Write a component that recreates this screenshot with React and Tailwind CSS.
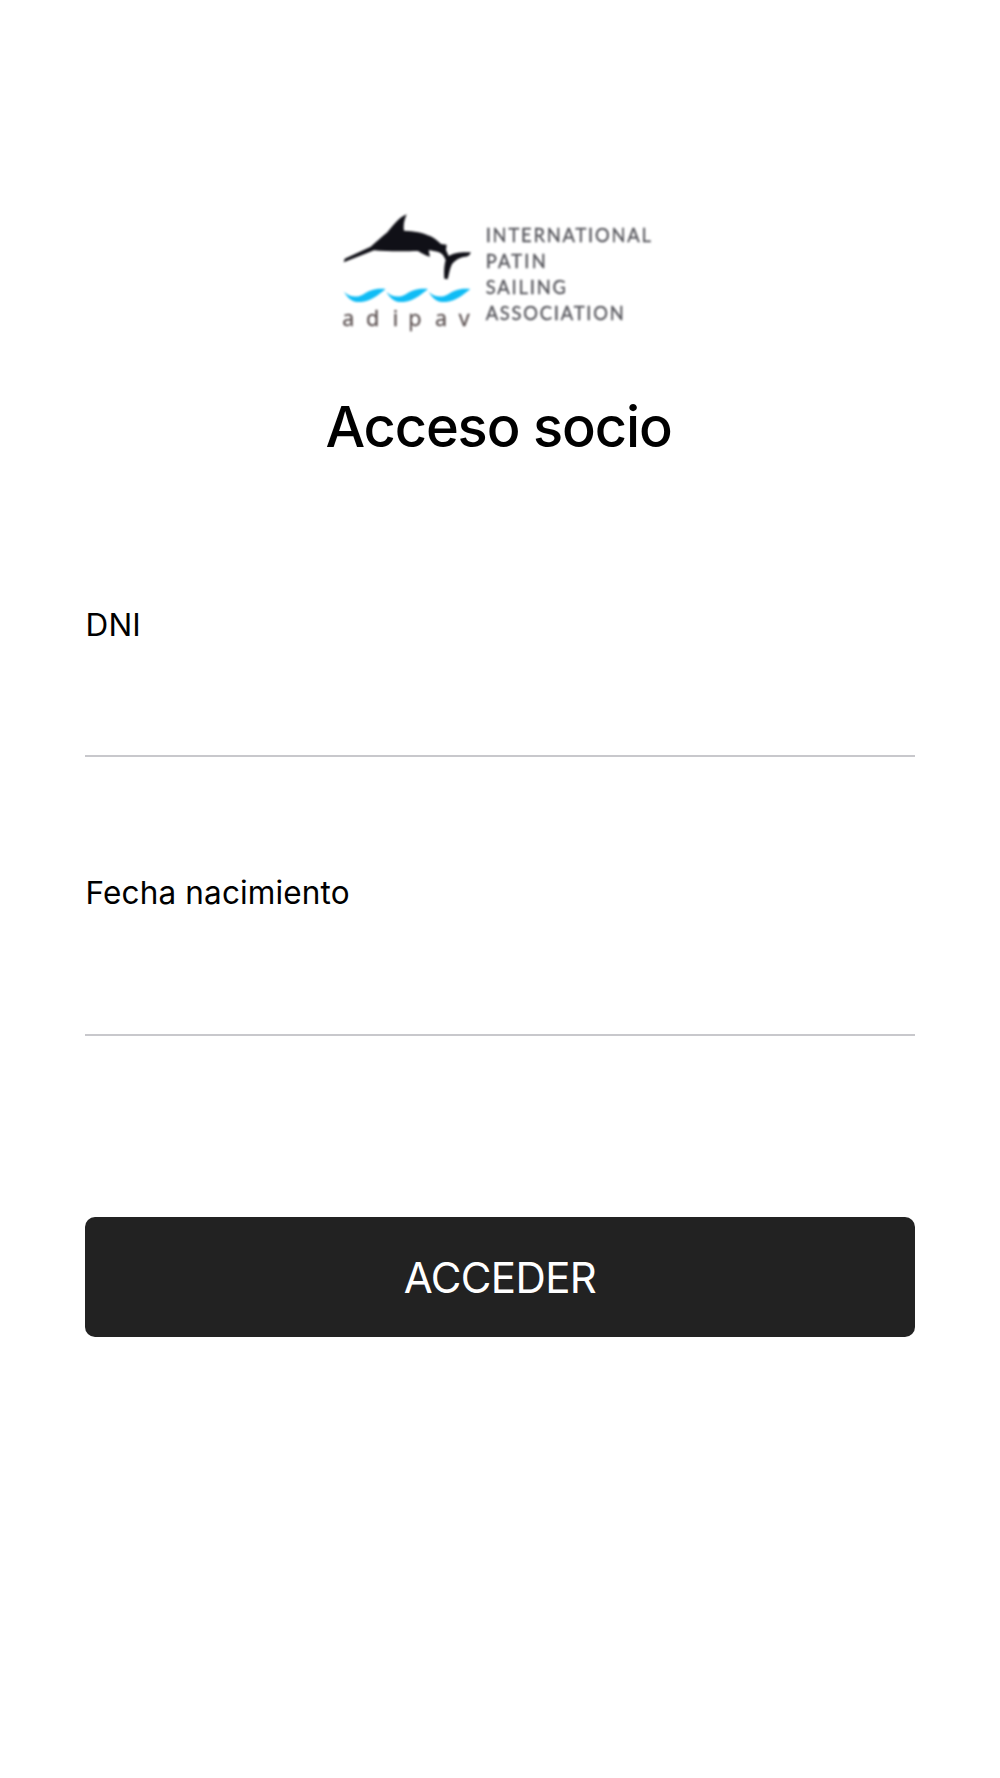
import React, { useState } from 'react';

// Marlin over three waves, with the association name beside it
const Logo = () => (
  <svg viewBox="0 0 1020 420" className="w-[340px] h-[140px] blur-[0.8px]" role="img" aria-label="adipav">
    <path
      fill="#101017"
      d="M41 187 L44 176 L122 140 C138 126 157 109 172 97 C188 78 205 53 230 43 C223 60 219 76 222 92 C252 93 280 98 302 109 C315 115 325 125 333 132 L350 134 L348 150 L356 168 C369 160 391 155 422 157 C421 165 416 169 406 170 C387 172 373 182 365 194 C358 209 357 224 353 238 L343 236 C341 216 343 194 347 180 C342 168 336 160 327 157 C315 154 303 150 296 151 L300 170 C286 168 276 159 264 153 C230 154 173 155 132 151 Z"
    />
    <g fill="#0fbcf5">
      <path d="M42 275 C60 292 80 293 98 284 C118 273 132 264 167 267 C151 279 129 302 94 306 C66 308 54 295 42 275 Z" />
      <path d="M169 275 C187 292 207 293 225 284 C245 273 259 264 294 267 C278 279 256 302 221 306 C193 308 181 295 169 275 Z" />
      <path d="M296 275 C314 292 334 293 352 284 C372 273 386 264 421 267 C405 279 383 302 348 306 C320 308 308 295 296 275 Z" />
    </g>
    <g fill="#5b5050" stroke="#5b5050" strokeWidth="1" className="font-['Open_Sans',sans-serif]" fontSize="65">
      <text x="37 108 188 235 315 386" y="379">adipav</text>
    </g>
    <g fill="#56565c" stroke="#56565c" strokeWidth="1" className="font-['Lato',sans-serif]" fontSize="55">
      <text x="467" y="126" textLength="496">INTERNATIONAL</text>
      <text x="467" y="204" textLength="180">PATIN</text>
      <text x="467" y="281" textLength="241">SAILING</text>
      <text x="467" y="360" textLength="414">ASSOCIATION</text>
    </g>
  </svg>
);

const Field = ({ id, label, value, onChange, className }) => (
  <div className={`flex flex-col border-b-2 border-[#c8c8cc] ${className}`}>
    <label htmlFor={id} className="pl-[0.5px] text-[31.5px] leading-10 tracking-[0.15px]">
      {label}
    </label>
    <input
      id={id}
      value={value}
      onChange={(e) => onChange(e.target.value)}
      className="w-full flex-1 min-h-0 text-[31px] outline-none"
    />
  </div>
);

const App = () => {
  const [dni, setDni] = useState('');
  const [birthDate, setBirthDate] = useState('');

  return (
    <main className="min-h-[1778px] bg-white text-black font-['Inter',sans-serif] px-[85px] pt-[200px]">
      <form className="flex flex-col" onSubmit={(e) => e.preventDefault()}>
        <div className="flex justify-center">
          <Logo />
        </div>
        <h1 className="mt-[53px] pr-[3px] text-center text-[56px] leading-[68px] font-medium tracking-[-1.15px]">
          Acceso socio
        </h1>
        <Field id="dni" label="DNI" value={dni} onChange={setDni} className="mt-[144px] h-[152px]" />
        <Field
          id="birthDate"
          label="Fecha nacimiento"
          value={birthDate}
          onChange={setBirthDate}
          className="mt-[116px] h-[163px]"
        />
        <button
          type="submit"
          className="mt-[181px] h-[120px] rounded-[10px] bg-[#222222] text-white text-[42px] tracking-[-0.6px]"
        >
          ACCEDER
        </button>
      </form>
    </main>
  );
};

export default App;
